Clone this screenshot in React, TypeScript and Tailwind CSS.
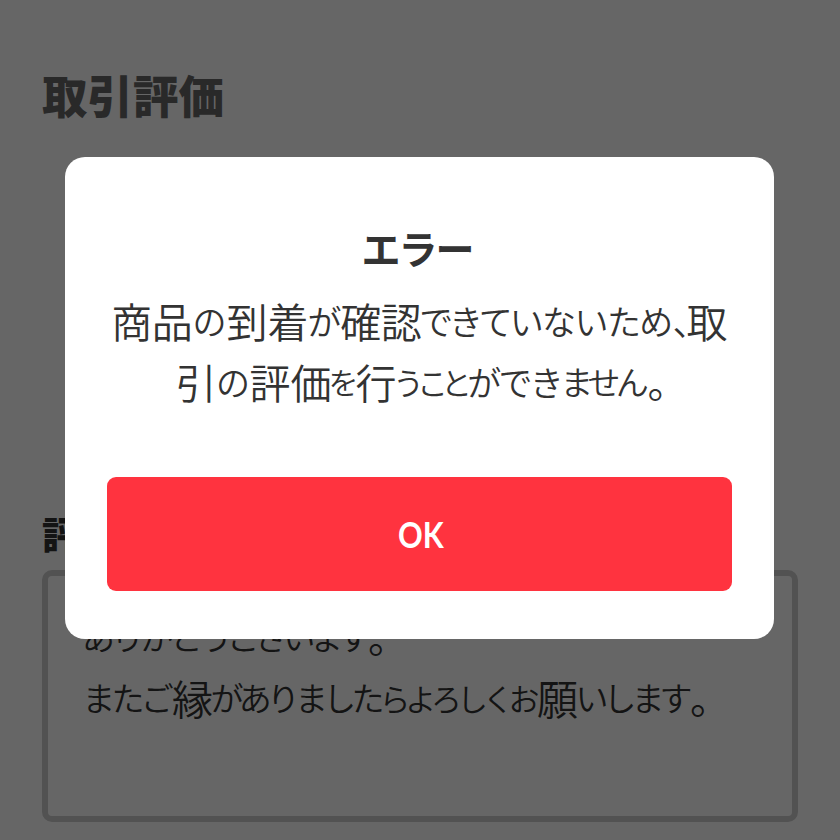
import React from 'react';

interface Run {
  text: string;
  size: number;
  width: number;
}

const errorLines: Run[][] = [
  [
    { text: '商品', size: 41, width: 81 },
    { text: 'の', size: 34, width: 34 },
    { text: '到着', size: 41, width: 82 },
    { text: 'が', size: 34, width: 32 },
    { text: '確認', size: 41, width: 81 },
    { text: 'できて', size: 34, width: 89 },
    { text: 'いないため', size: 34, width: 162 },
    { text: '、', size: 36, width: 14 },
    { text: '取', size: 41, width: 41 },
  ],
  [
    { text: '引', size: 41, width: 41 },
    { text: 'の', size: 34, width: 33 },
    { text: '評価', size: 41, width: 82 },
    { text: 'を', size: 30, width: 24 },
    { text: '行', size: 41, width: 41 },
    { text: 'うこと', size: 31, width: 72 },
    { text: 'ができ', size: 34, width: 94 },
    { text: 'ません', size: 33, width: 85 },
    { text: '。', size: 40, width: 16 },
  ],
];

const commentLines: Run[][] = [
  [
    { text: 'ありがとう', size: 33, width: 146 },
    { text: 'ございます', size: 33, width: 138 },
    { text: '。', size: 40, width: 16 },
  ],
  [
    { text: 'またご', size: 33, width: 88 },
    { text: '縁', size: 41, width: 41 },
    { text: 'がありました', size: 33, width: 169 },
    { text: 'らよろしくお', size: 31, width: 155 },
    { text: '願', size: 41, width: 41 },
    { text: 'いします', size: 33, width: 112 },
    { text: '。', size: 40, width: 16 },
  ],
];

const isMark = (text: string) => text === '。' || text === '、';

// Kana are set smaller and tighter than kanji, like handwriting.
const TextLine: React.FC<{ runs: Run[] }> = ({ runs }) => (
  <div className="flex h-[61px] items-center whitespace-nowrap leading-[61px]">
    {runs.map(({ text, size, width }, i) => {
      const spacing = width / text.length - size;
      return (
        <span
          key={i}
          className="shrink-0"
          style={{
            fontSize: size,
            width,
            letterSpacing: spacing,
            textIndent: isMark(text) ? 0 : spacing / 2,
          }}
        >
          {text}
        </span>
      );
    })}
  </div>
);

const RatingPage: React.FC = () => (
  <main className="flex h-full flex-col bg-white px-[42px] text-[#333]">
    <h1 className="mt-[61px] h-[66px] text-[45.5px] font-black leading-[66px] text-[#666]">取引評価</h1>
    <h2 className="mt-[376px] h-[60px] text-[38px] font-black leading-[60px]">評価コメント</h2>
    <div className="mt-[7px] h-[252px] rounded-[10px] border-6 border-[#cdcdcd] pl-[36px] pt-[30px]">
      {commentLines.map((runs, i) => (
        <TextLine key={i} runs={runs} />
      ))}
    </div>
  </main>
);

const ErrorDialog: React.FC = () => (
  <div role="dialog" className="flex h-[482px] w-[709px] flex-col items-center rounded-[20px] bg-white px-[42px] text-[#333]">
    <h2 className="mt-[60px] h-[60px] pr-[5px] text-[39px] font-bold leading-[60px] tracking-[-2px]">エラー</h2>
    <div className="mt-[13px] flex flex-col items-center">
      {errorLines.map((runs, i) => (
        <TextLine key={i} runs={runs} />
      ))}
    </div>
    <button className="mt-[65px] h-[114px] w-full rounded-[9px] bg-[#ff333f] pl-[2px] font-['Lato'] text-[36px] font-bold text-white">
      <span className="inline-block scale-x-85">OK</span>
    </button>
  </div>
);

export default function App() {
  return (
    <div className="relative h-[840px] w-[840px] overflow-hidden font-['Noto_Sans_CJK_JP',sans-serif] font-[350]">
      <RatingPage />
      <div className="absolute inset-0 flex items-start bg-black/60 pl-[65px] pt-[157px]">
        <ErrorDialog />
      </div>
    </div>
  );
}
